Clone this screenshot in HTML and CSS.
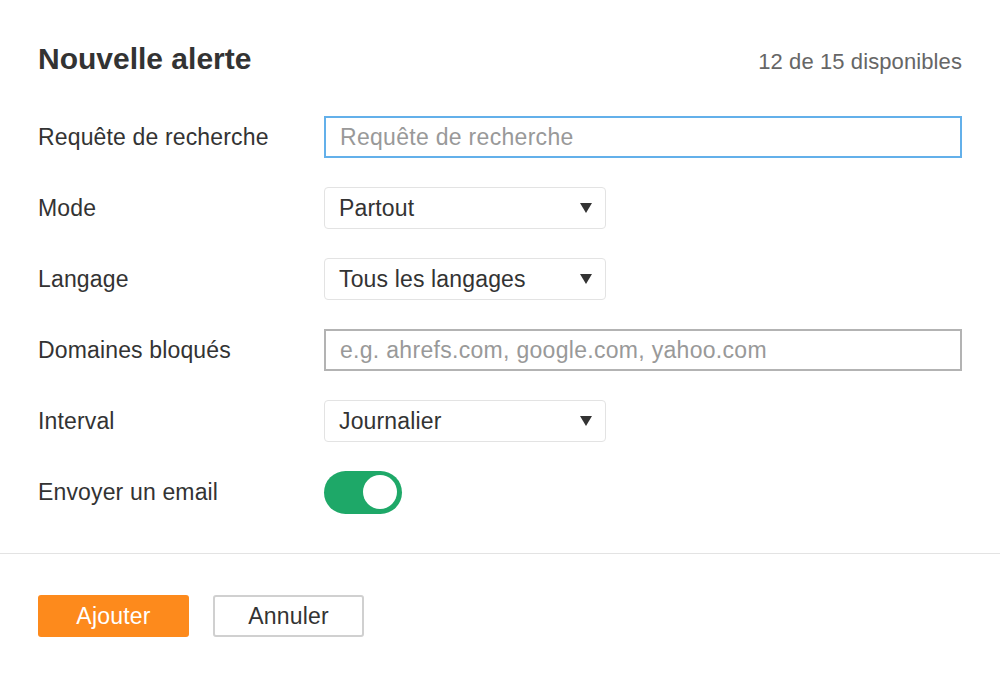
FILE: index.html
```html
<!DOCTYPE html>
<html lang="fr">
<head>
<meta charset="utf-8">
<title>Nouvelle alerte</title>
<link rel="stylesheet" href="styles.css">
</head>
<body>
<div class="dialog">
  <header class="head">
    <h1 class="title">Nouvelle alerte</h1>
    <span class="quota">12 de 15 disponibles</span>
  </header>
  <form class="form">
    <label class="label">Requête de recherche</label>
    <div class="field"><div class="input input-focus"><span class="ph">Requête de recherche</span></div></div>

    <label class="label">Mode</label>
    <div class="field"><div class="select"><span>Partout</span><span class="caret"></span></div></div>

    <label class="label">Langage</label>
    <div class="field"><div class="select"><span>Tous les langages</span><span class="caret"></span></div></div>

    <label class="label">Domaines bloqués</label>
    <div class="field"><div class="input input-plain"><span class="ph">e.g. ahrefs.com, google.com, yahoo.com</span></div></div>

    <label class="label">Interval</label>
    <div class="field"><div class="select"><span>Journalier</span><span class="caret"></span></div></div>

    <label class="label">Envoyer un email</label>
    <div class="field"><div class="toggle"><span class="knob"></span></div></div>
  </form>
  <div class="divider"></div>
  <footer class="foot">
    <button class="btn btn-primary" type="button">Ajouter</button>
    <button class="btn btn-secondary" type="button">Annuler</button>
  </footer>
</div>
</body>
</html>
```

FILE: styles.css
```css
html, body {
  margin: 0;
  padding: 0;
  background: #fff;
}
body {
  font-family: "Liberation Sans", Arial, Helvetica, sans-serif;
  color: #333;
}
.dialog {
  width: 1000px;
}
.head {
  display: flex;
  justify-content: space-between;
  align-items: baseline;
  padding: 41px 38px 0 38px;
}
.title {
  margin: 0;
  font-size: 30px;
  font-weight: bold;
  line-height: 36px;
  color: #333;
}
.quota {
  font-size: 22px;
  color: #666;
  letter-spacing: 0.1px;
}
.form {
  display: grid;
  grid-template-columns: 286px 1fr;
  row-gap: 29px;
  padding: 39px 38px 0 38px;
  align-items: center;
}
.label {
  font-size: 23px;
  letter-spacing: 0.15px;
  color: #333;
}
.field {
  height: 42px;
  display: flex;
  align-items: center;
}
.input {
  box-sizing: border-box;
  width: 100%;
  height: 42px;
  display: flex;
  align-items: center;
  padding-left: 14px;
  font-size: 23px;
  letter-spacing: 0.3px;
}
.input-focus {
  border: 2px solid #63b0ea;
}
.input-plain {
  border: 2px solid #b3b3b3;
}
.ph {
  color: #999;
}
.select {
  box-sizing: border-box;
  width: 282px;
  height: 42px;
  border: 1px solid #e3e3e3;
  border-radius: 4px;
  display: flex;
  align-items: center;
  justify-content: space-between;
  padding: 0 13px 0 14px;
  font-size: 23px;
  letter-spacing: 0.15px;
  color: #333;
}
.caret {
  width: 0;
  height: 0;
  border-left: 6px solid transparent;
  border-right: 6px solid transparent;
  border-top: 10px solid #333;
}
.toggle {
  box-sizing: border-box;
  width: 78px;
  height: 43px;
  border-radius: 22px;
  background: #1ea868;
  display: flex;
  align-items: center;
  justify-content: flex-end;
  padding-right: 5px;
}
.knob {
  width: 34px;
  height: 34px;
  border-radius: 50%;
  background: #fff;
}
.divider {
  margin-top: 40px;
  height: 1px;
  background: #e3e3e3;
}
.foot {
  display: flex;
  gap: 24px;
  padding: 41px 38px 0 38px;
}
.btn {
  box-sizing: border-box;
  width: 151px;
  height: 42px;
  border-radius: 3px;
  font-family: "Liberation Sans", Arial, Helvetica, sans-serif;
  font-size: 23px;
  letter-spacing: 0.2px;
  cursor: pointer;
}
.btn-primary {
  background: #fd8a1c;
  border: none;
  color: #fff;
}
.btn-secondary {
  background: #fff;
  border: 2px solid #d0d0d0;
  color: #333;
}
```
